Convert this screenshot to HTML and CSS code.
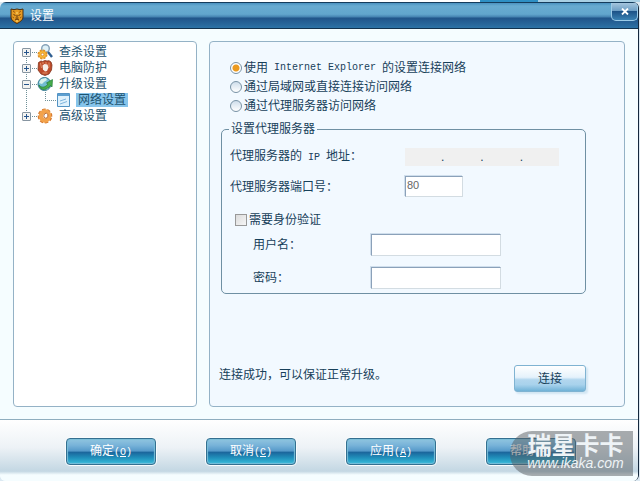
FILE: index.html
```html
<!doctype html>
<html lang="zh-CN">

<head>
  <meta charset="UTF-8" />
  <meta name="viewport" content="width=device-width, initial-scale=1.0" />
  <title>设置</title>
  <link rel="stylesheet" href="styles.css">
</head>

<body>
  <div class="window">
    <header class="title-bar">
      <svg class="title-icon" viewBox="0 0 14 16">
        <path d="M1 1l3 .7L7 1l3 .7L13 1v8c0 3-3 5-6 6.500C4 14 1 12 1 9z" fill="#e69a22" stroke="#4b2c0c" />
        <path d="M3.500 6.500l2 1M10.500 6.500l-2 1M7 7v2M5.500 10h3M5 12l2-1 2 1" fill="none" stroke="#5f350b" />
        <path d="M3 3l2 1.500M11 3L9 4.500M2.500 9l1.500 1M11.500 9L10 10" stroke="#9a5a12" />
        <path d="M6 5h2M6 13h2" stroke="#ffe07a" />
      </svg>
      <h1 class="title">设置</h1>
      <button type="button" class="close-button" aria-label="关闭">
        <svg viewBox="0 0 8 7"><path d="M1 .5l6 6M7 .5l-6 6" stroke="#fff" stroke-width="1.800" /></svg>
      </button>
    </header>

    <main class="content">
      <nav class="tree">
        <ul class="tree-list">
          <li class="tree-item">
            <button type="button" class="toggle" aria-label="展开"></button>
            <svg class="tree-icon" viewBox="0 0 16 16">
              <circle cx="8.500" cy="4.500" r="3.800" fill="#dff1f8" stroke="#8aa5bb" stroke-width="1.500" />
              <path d="M11 8l4 5" stroke="#315f91" stroke-width="2.400" />
              <circle cx="5.500" cy="10.500" r="4" fill="#f6ad27" stroke="#e0912a" stroke-width="2" stroke-dasharray="2 1.140" />
              <circle cx="5.500" cy="10.500" r="3.300" fill="#f8b638" />
              <circle cx="5.500" cy="10.500" r="1.300" fill="#fff" stroke="#c2701b" stroke-width=".6" />
            </svg>
            <a href="#" class="tree-link">查杀设置</a>
          </li>
          <li class="tree-item">
            <button type="button" class="toggle" aria-label="展开"></button>
            <svg class="tree-icon" viewBox="0 0 16 16">
              <path d="M1.500 2.500L4 1l1.500.5L8 .5l2 .5 2-.3 2 1.300 1 3-.5 5-2.500 4-4 1.500-4-1.500-3-4z" fill="#bd4c2b" stroke="#81351d" stroke-width=".8" />
              <path d="M5.500 5.500l2-1.500 3 .5 1 3-1.500 3.500-2 .5-2-2z" fill="#f6efe8" />
              <path d="M3.500 3l1 5M6 2v2M9 2v2M12 2.500v5M5.500 13h5" stroke="#e19168" fill="none" />
            </svg>
            <a href="#" class="tree-link">电脑防护</a>
          </li>
          <li class="tree-item">
            <button type="button" class="toggle open" aria-label="折叠"></button>
            <svg class="tree-icon" viewBox="0 0 16 16">
              <circle cx="7.500" cy="8" r="6.500" fill="#72bdd2" stroke="#34788e" />
              <path d="M4 3l5-1 1 2-3 2-2 2-3-1zM9 12l3-1-2 3z" fill="#d7f1ec" />
              <path d="M2 9c2 3 6 3 9-1L9.500 7 15.500 3.500 15 11l-1.500-1.500C10 14 5 15 2.500 11z" fill="#47ad4b" stroke="#237c39" stroke-width=".7" />
            </svg>
            <a href="#" class="tree-link">升级设置</a>
            <ul class="tree-sub">
              <li class="tree-leaf">
                <svg class="leaf-icon" viewBox="0 0 13 14">
                  <path d="M.5.5h12v13H.5z" fill="#dff1fc" stroke="#5393c4" />
                  <path d="M1 2h11" stroke="#5d9fd0" stroke-width="2" />
                  <path d="M3 8l6-2M3 11l7-2.500" stroke="#7fb4dc" />
                </svg>
                <a href="#" class="tree-link selected">网络设置</a>
              </li>
            </ul>
          </li>
          <li class="tree-item">
            <button type="button" class="toggle" aria-label="展开"></button>
            <svg class="tree-icon" viewBox="0 0 16 16">
              <ellipse cx="8" cy="8" rx="5.800" ry="6" fill="none" stroke="#d6792f" stroke-width="3" stroke-dasharray="3 1.600" transform="rotate(15 8 8)" />
              <ellipse cx="8" cy="8" rx="4" ry="4.500" fill="none" stroke="#f3a24a" stroke-width="4.500" transform="rotate(15 8 8)" />
              <ellipse cx="8.800" cy="7.500" rx="2" ry="2.500" fill="#fff" stroke="#b4612a" stroke-width=".8" transform="rotate(15 8 8)" />
            </svg>
            <a href="#" class="tree-link">高级设置</a>
          </li>
        </ul>
      </nav>

      <form class="panel" id="settings">
        <div class="mode-list">
          <label class="option"><input type="radio" name="mode" class="radio" checked />使用<span class="latin"> Internet Explorer </span>的设置连接网络</label>
          <label class="option"><input type="radio" name="mode" class="radio" />通过局域网或直接连接访问网络</label>
          <label class="option"><input type="radio" name="mode" class="radio" />通过代理服务器访问网络</label>
        </div>

        <fieldset class="proxy">
          <legend>设置代理服务器</legend>
          <div class="row">
            <label class="row-label" for="ip1">代理服务器的<span class="latin"> IP </span>地址：</label>
            <div class="ip-box">
              <input type="text" id="ip1" class="ip-part" maxlength="3" disabled /><span>.</span>
              <input type="text" class="ip-part" maxlength="3" aria-label="IP 第二段" disabled /><span>.</span>
              <input type="text" class="ip-part" maxlength="3" aria-label="IP 第三段" disabled /><span>.</span>
              <input type="text" class="ip-part" maxlength="3" aria-label="IP 第四段" disabled />
            </div>
          </div>
          <div class="row port-row">
            <label class="row-label" for="port">代理服务器端口号：</label>
            <input type="text" id="port" class="field port" value="80" />
          </div>
          <label class="auth"><input type="checkbox" class="checkbox" />需要身份验证</label>
          <div class="row user-row">
            <label class="row-label" for="user">用户名：</label>
            <input type="text" id="user" class="field" />
          </div>
          <div class="row user-row">
            <label class="row-label" for="password">密码：</label>
            <input type="password" id="password" class="field" />
          </div>
        </fieldset>

        <div class="status">
          <p>连接成功，可以保证正常升级。</p>
          <button type="button" class="connect-button">连接</button>
        </div>
      </form>
    </main>

    <footer class="actions">
      <button type="submit" form="settings" class="action-button">确定<span class="latin">(<u>O</u>)</span></button>
      <button type="button" class="action-button">取消<span class="latin">(<u>C</u>)</span></button>
      <button type="button" class="action-button">应用<span class="latin">(<u>A</u>)</span></button>
      <button type="button" class="action-button">帮助<span class="latin">(<u>H</u>)</span></button>
      <div class="watermark">
        <span class="mark-name">瑞星卡卡</span>
        <span class="mark-url">www.ikaka.com</span>
      </div>
    </footer>
  </div>
</body>

</html>
```

FILE: styles.css
```css
* {
  margin: 0;
  padding: 0;
  box-sizing: border-box;
}

body {
  min-height: 100vh;
  display: flex;
  padding: 2px 1px 0 0;
  background: linear-gradient(to right, #fff 75%, #2e8fc4 75%, #2e8fc4 84%, #a9d0e4 84%) top / 100% 2px no-repeat #dce9f2;
  font-family: "Liberation Sans", "Noto Sans CJK SC", sans-serif;
  font-size: 12px;
  line-height: 14px;
  color: #17405a;
}

button,
input {
  font: inherit;
  color: inherit;
}

.latin {
  font-family: "Liberation Mono", monospace;
  font-size: 10px;
  white-space: pre;
}

.window {
  flex: 1;
  display: flex;
  flex-direction: column;
  border-right: 1px solid #14283d;
  border-radius: 6px;
  background-color: #f5fdff;
  overflow: hidden;
}

.title-bar {
  display: flex;
  align-items: center;
  gap: 6px;
  height: 27px;
  padding-left: 10px;
  border-top: 1px solid #153c5c;
  border-bottom: 1px solid #12324e;
  background: linear-gradient(#4a92c0, #68abd1 12%, #61a5cd 45%, #4381b0 56%, #20548a 60%, #28669a 85%, #2c73a6);
}

.title-icon {
  width: 14px;
  height: 16px;
}

.title {
  flex: 1;
  font-size: 12px;
  font-weight: 400;
  color: #fff;
}

.close-button {
  align-self: flex-start;
  display: flex;
  align-items: center;
  justify-content: center;
  width: 27px;
  height: 18px;
  border: 1px solid #9ccbe7;
  border-top: none;
  border-radius: 0 0 5px 5px;
  background: linear-gradient(#a4c5dd, #6e9fc5 45%, #1d5388 50%, #3a82b3);
}

.close-button svg {
  width: 8px;
  height: 7px;
}

.content {
  flex: 1;
  display: flex;
  gap: 12px;
  padding: 12px 13px;
}

.tree,
.panel {
  border: 1px solid #94b2c6;
  border-radius: 4px;
}

.tree {
  width: 184px;
  padding: 2px 8px;
  background-color: #fff;
}

.tree-list,
.tree-sub {
  list-style: none;
}

.tree-item {
  display: grid;
  grid-template-columns: 9px 6px 16px 1fr;
  grid-auto-rows: 16px;
  align-items: center;
  background: repeating-linear-gradient(to right, #6f9098 0 1px, transparent 1px 2px) 10px 8px / 5px 1px no-repeat,
    repeating-linear-gradient(#6f9098 0 1px, transparent 1px 2px) 4px 0 / 1px 100% no-repeat;
}

.tree-item:first-child {
  background-position: 10px 8px, 4px 8px;
}

.tree-item:last-child {
  background-size: 5px 1px, 1px 8px;
}

.toggle {
  width: 9px;
  height: 9px;
  border: 1px solid #8795a1;
  border-radius: 1px;
  background: linear-gradient(#26548c, #26548c) center / 5px 1px no-repeat,
    linear-gradient(#26548c, #26548c) center / 1px 5px no-repeat,
    #f3f3f1;
}

.toggle.open {
  background: linear-gradient(#26548c, #26548c) center / 5px 1px no-repeat, #f3f3f1;
}

.tree-icon {
  grid-column: 3;
  width: 16px;
  height: 16px;
}

.tree-link {
  margin-left: 4px;
  padding: 0 2px;
  color: #1d536f;
  text-decoration: none;
}

.tree-sub {
  grid-column: 3 / 5;
}

.tree-leaf {
  display: flex;
  align-items: center;
  height: 16px;
  margin-left: 8px;
  padding-left: 12px;
  background: repeating-linear-gradient(#6f9098 0 1px, transparent 1px 2px) 0 0 / 1px 8px no-repeat,
    repeating-linear-gradient(to right, #6f9098 0 1px, transparent 1px 2px) 0 8px / 11px 1px no-repeat;
}

.leaf-icon {
  width: 13px;
  height: 14px;
}

.selected {
  margin-left: 6px;
  background-color: #86c4eb;
}

.panel {
  flex: 1;
  display: flex;
  flex-direction: column;
  padding: 19px 38px 14px 11px;
  background-color: #f2f9ff;
}

.mode-list {
  display: flex;
  flex-direction: column;
  gap: 5px;
  padding-left: 9px;
}

.option,
.auth {
  display: flex;
  align-items: center;
  white-space: pre;
}

.radio {
  appearance: none;
  width: 12px;
  height: 12px;
  margin-right: 2px;
  border: 1px solid #7892a5;
  border-radius: 50%;
  background: linear-gradient(#cfdeeb, #fff);
}

.radio:checked {
  background: radial-gradient(circle, #eb9a20 0 3px, #fff 4px);
}

.proxy {
  margin-top: 9px;
  padding: 12px 8px 4px;
  border: 1px solid #6f90a3;
  border-radius: 5px;
}

.proxy legend {
  padding: 0 2px;
  margin-left: -1px;
}

.row {
  display: flex;
  align-items: center;
}

.row-label {
  width: 175px;
}

.ip-box {
  display: flex;
  width: 154px;
  height: 18px;
  line-height: 18px;
  background-color: #f0f0f0;
}

.ip-part {
  flex: 1;
  min-width: 0;
  border: none;
  background: none;
  text-align: center;
}

.port-row {
  margin-top: 10px;
}

.field {
  width: 130px;
  height: 22px;
  padding: 0 1px;
  border: 1px solid;
  border-color: #8ba1b9 #d3dce2 #d3dce2 #8ba1b9;
  background-color: #fff;
  box-shadow: -1px -1px 0 #cfdeec;
}

.port {
  width: 58px;
  height: 21px;
  padding-bottom: 4px;
  font-size: 11px;
  color: #666;
}

.auth {
  margin: 16px 0 7px 5px;
}

.checkbox {
  appearance: none;
  width: 12px;
  height: 12px;
  margin-right: 2px;
  border: 1px solid #999;
  background: linear-gradient(135deg, #dcdcdc, #f6f6f6);
}

.checkbox:checked {
  background: #4381b0;
}

.user-row {
  padding-left: 23px;
}

.user-row .row-label {
  width: 118px;
}

.user-row + .user-row {
  margin-top: 11px;
}

.status {
  display: flex;
  justify-content: space-between;
  margin-top: auto;
  margin-left: -2px;
}

.status p {
  padding-top: 3px;
}

.connect-button {
  width: 72px;
  height: 27px;
  border: 1px solid #7fb3d2;
  border-radius: 3px;
  background: linear-gradient(#fff, #e5f2fb 45%, #b2d6ee 55%, #a8d2ec 75%, #70b2d7);
  box-shadow: 2px 2px 2px #d2e6f3;
}

.actions {
  position: relative;
  display: flex;
  justify-content: center;
  gap: 50px;
  height: 62px;
  padding: 18px 0 0 4px;
  border-top: 1px solid #8faebf;
  background: linear-gradient(#fff, #edf2f6 45%, #c3d7e3 84%, #f5fdff 90%);
}

.action-button {
  width: 90px;
  height: 27px;
  border: 1px solid #346f90;
  border-radius: 4px;
  background: linear-gradient(#91c5df, #78b3d9 25%, #5599c9 48%, #1b669c 53%, #208fba 75%, #38bedc);
  box-shadow: 0 0 0 1px #f8fcfd, inset 0 0 1px 1px #7bbfd9;
  color: #fff;
}

.watermark {
  position: absolute;
  top: 11px;
  right: 5px;
  display: flex;
  flex-direction: column;
  align-items: center;
  width: 123px;
  height: 45px;
  padding: 5px 0 0 8px;
  border-radius: 22px 0 0 22px;
  background-color: rgba(86, 91, 96, 0.5);
  color: #eef3f6;
}

.mark-name {
  font-size: 24px;
  font-weight: 700;
  line-height: 19px;
}

.mark-url {
  font-size: 14px;
  font-style: italic;
  line-height: 16px;
}
```
